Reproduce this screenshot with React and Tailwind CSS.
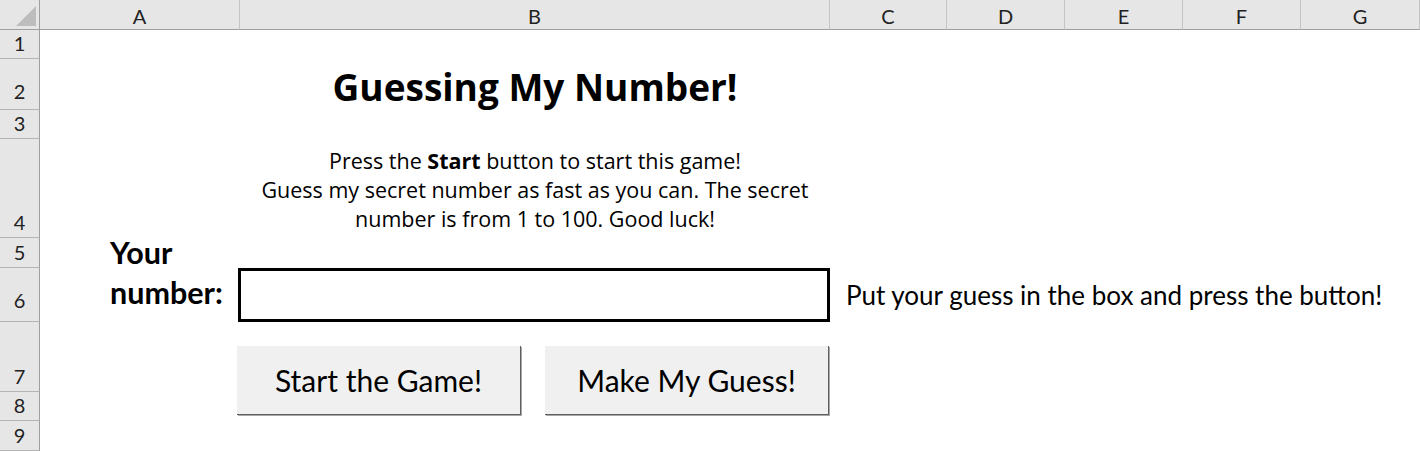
const columns = ["A", "B", "C", "D", "E", "F", "G"];

// row header: number + bottom padding so the digit sits where Excel draws it
const rows = [
  { n: 1, pb: "pb-[5px]" },
  { n: 2, pb: "pb-[8px]" },
  { n: 3, pb: "pb-[5px]" },
  { n: 4, pb: "pb-[5px]" },
  { n: 5, pb: "pb-[5px]" },
  { n: 6, pb: "pb-[11px]" },
  { n: 7, pb: "pb-[5px]" },
  { n: 8, pb: "pb-[5px]" },
  { n: 9, pb: "pb-[5px]" },
];

const calibri = "font-['Lato',sans-serif]";
const trebuchet = "font-['Open_Sans',sans-serif]";

const buttonClass =
  "w-[284px] h-[69px] bg-[#f0f0f0] border-r border-b border-[#5f5f5f] shadow-[1px_1px_0_#a8a8a8] text-[30px] leading-none";

const App = () => {
  return (
    <div
      className={`grid w-[1420px] h-[451px] overflow-hidden bg-white text-black ${calibri} grid-cols-[40px_200px_590px_117px_118px_118px_118px_119px] grid-rows-[30px_29px_51px_29px_99px_30px_54px_70px_29px_30px]`}
    >
      {/* corner */}
      <div className="col-start-1 row-start-1 bg-[#e6e6e6] border-r border-b border-[#9f9f9f]">
        <svg width="39" height="29" viewBox="0 0 39 29">
          <polygon points="36,6 36,26 16,26" fill="#bdbdbd" />
        </svg>
      </div>

      {/* column headers */}
      {columns.map((letter) => (
        <div
          key={letter}
          className="row-start-1 flex items-center justify-center pt-[3px] bg-[#e6e6e6] border-b border-b-[#9f9f9f] border-r border-r-[#c4c4c4] text-[20px] leading-none text-[#222]"
        >
          {letter}
        </div>
      ))}

      {/* row headers */}
      {rows.map((row) => (
        <div
          key={row.n}
          className={`col-start-1 flex items-end justify-center bg-[#e6e6e6] border-r border-r-[#9f9f9f] border-b border-b-[#b4b4b4] text-[20px] leading-none text-[#222] ${row.pb}`}
        >
          {row.n}
        </div>
      ))}

      {/* B2: title */}
      <div className="col-start-3 row-start-3 flex items-end justify-center pb-[5px]">
        <h1 className={`${trebuchet} text-[37px] font-bold leading-none`}>
          Guessing My Number!
        </h1>
      </div>

      {/* B4: instructions */}
      <div className="col-start-3 row-start-5 flex items-end justify-center pb-[5px]">
        <p className={`${trebuchet} text-[21.5px] leading-[29px] text-center whitespace-nowrap`}>
          Press the <b>Start</b> button to start this game!
          <br />
          Guess my secret number as fast as you can. The secret
          <br />
          number is from 1 to 100. Good luck!
        </p>
      </div>

      {/* A5:A6 label */}
      <div className="col-start-2 row-start-6 row-end-8 flex flex-col justify-end pl-[70px] pb-[10px] text-[30.5px] font-bold leading-[40px]">
        <span>Your</span>
        <span>number:</span>
      </div>

      {/* B6: input */}
      <div className="col-start-3 row-start-7 flex -ml-[2px]">
        <input className="w-full h-full border-[3px] border-black outline-none px-2 text-[24px]" />
      </div>

      {/* C6: hint */}
      <div className="col-start-4 row-start-7 flex items-center pl-[16px] whitespace-nowrap text-[26px] leading-none">
        Put your guess in the box and press the button!
      </div>

      {/* B7: buttons */}
      <div className="col-start-3 row-start-8 row-end-10 flex items-start gap-[24px] pt-[24px] -ml-[3px]">
        <button className={buttonClass}>Start the Game!</button>
        <button className={buttonClass}>Make My Guess!</button>
      </div>
    </div>
  );
};

export default App;
